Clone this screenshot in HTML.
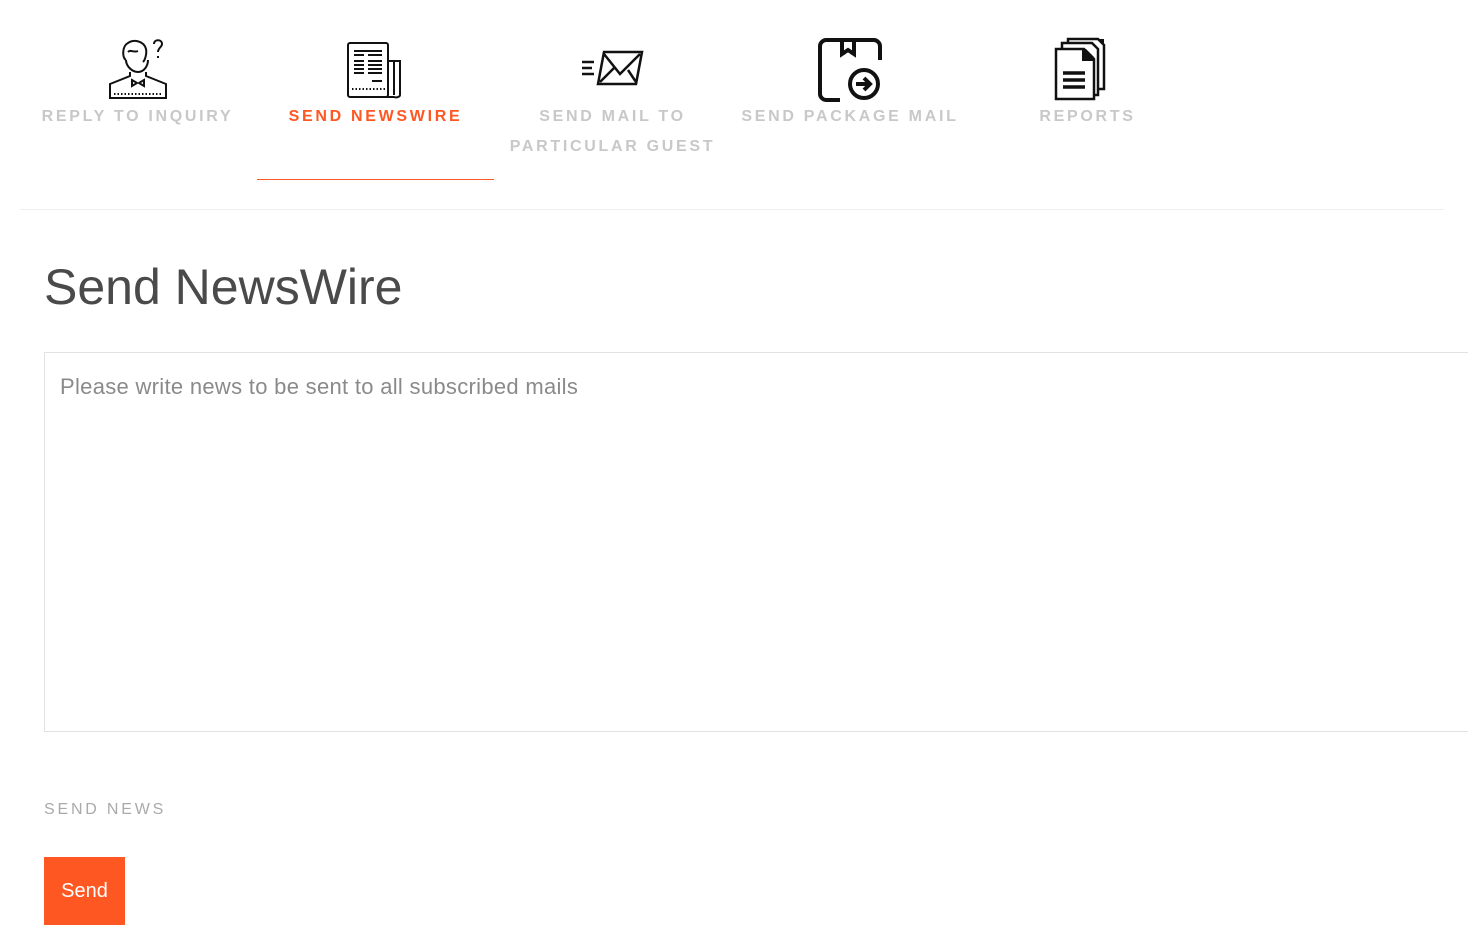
<!DOCTYPE html>
<html><head><meta charset="utf-8"><style>
body{margin:0;width:1468px;height:930px;background:#fff;font-family:"Liberation Sans",sans-serif;position:relative;overflow:hidden}
.t{position:absolute;font-size:16px;font-weight:bold;letter-spacing:2.7px;color:#c8c8c8;text-align:center;line-height:30px}
svg{position:absolute}
</style></head><body>
<svg style="left:106px;top:38px" width="64" height="62" viewBox="0 0 64 62" fill="none" stroke="#111" stroke-width="2">
<path d="M20 22c-4-2-4-14 2-17 6-4 16-2 18 6 1 5-1 11-3 13"/><path d="M22 14c3-3 5 1 10-1"/>
<path d="M20 22c0 6 6 12 12 12s10-6 10-12"/><path d="M24 34v4l-20 8v14h56V46l-20-8v-4"/>
<path d="M26 42l5 3-5 3zM38 42l-5 3 5 3z"/><path d="M8 56h48" stroke-dasharray="1.5 2"/>
<path d="M48 6c0-5 8-5 8 0 0 3-4 4-4 8M52 18v2"/></svg>
<svg style="left:346px;top:41px" width="60" height="58" viewBox="0 0 60 58" fill="none" stroke="#111" stroke-width="2">
<rect x="2" y="2" width="40" height="54" rx="2"/><path d="M42 20h12v34c0 2-4 3-6 2H8"/><path d="M48 20v34"/>
<path d="M8 10h28M8 14h10M22 14h14M8 20h10M22 20h14M8 24h10M22 24h14M8 28h10M22 28h14M8 32h10M22 32h14M26 40h10" stroke-width="2"/>
<path d="M6 48h34" stroke-dasharray="1.5 2"/></svg>
<svg style="left:580px;top:50px" width="66" height="38" viewBox="0 0 66 38" fill="none" stroke="#111" stroke-width="2.5">
<path d="M2 12h12M2 18h10M2 24h12"/><path d="M24 2h38l-6 32H18z"/><path d="M24 4l16 20 20-20M20 32l14-14M56 32l-8-12"/></svg>
<svg style="left:818px;top:38px" width="64" height="64" viewBox="0 0 64 64" fill="none" stroke="#111" stroke-width="4">
<path d="M22 62H8c-3 0-6-3-6-6V8c0-3 3-6 6-6h48c3 0 6 3 6 6v14"/><path d="M24 2v14l6-4 6 4V2"/>
<circle cx="46" cy="46" r="14"/><path d="M38 46h14M46 40l6 6-6 6"/></svg>
<svg style="left:1054px;top:37px" width="66" height="64" viewBox="0 0 66 64">
<path d="M14 2h30l6 6v44H14z" fill="#fff" stroke="#111" stroke-width="2.5"/>
<path d="M8 6h30l6 6v46H8z" fill="#fff" stroke="#111" stroke-width="2.5"/>
<path d="M2 12h28l10 10v40H2z" fill="#fff" stroke="#111" stroke-width="2.5"/>
<path d="M28 12h4l8 8v4H28z" fill="#111"/><path d="M36 2h8l6 6v-6z" fill="#111"/>
<path d="M9 36h22M9 43h22M9 50h22" stroke="#111" stroke-width="3.5"/></svg>
<div class="t" style="left:30px;top:102px;width:215px">REPLY TO INQUIRY</div>
<div class="t" style="left:257px;top:102px;width:237px;color:#ff5722">SEND NEWSWIRE</div>
<div class="t" style="left:500px;top:102px;width:225px">SEND MAIL TO<br>PARTICULAR GUEST</div>
<div class="t" style="left:735px;top:102px;width:230px">SEND PACKAGE MAIL</div>
<div class="t" style="left:1020px;top:102px;width:135px">REPORTS</div>
<div style="position:absolute;left:257px;top:179px;width:237px;height:0;border-top:1px solid #ff5722"></div>
<div style="position:absolute;left:20px;top:209px;width:1424px;height:1px;background:#eee"></div>
<div style="position:absolute;left:44px;top:258px;font-size:50px;color:#4a4a4a">Send NewsWire</div>
<div style="position:absolute;left:44px;top:352px;width:1430px;height:378px;border:1px solid #e2e2e2"></div>
<div style="position:absolute;left:60px;top:374px;font-size:22px;color:#8a8a8a;letter-spacing:0.3px">Please write news to be sent to all subscribed mails</div>
<div style="position:absolute;left:44px;top:801px;font-size:16px;letter-spacing:2.8px;color:#aaa">SEND NEWS</div>
<div style="position:absolute;left:44px;top:857px;width:81px;height:68px;background:#ff5722;color:#fff;font-size:20px;line-height:68px;text-align:center">Send</div>
</body></html>
